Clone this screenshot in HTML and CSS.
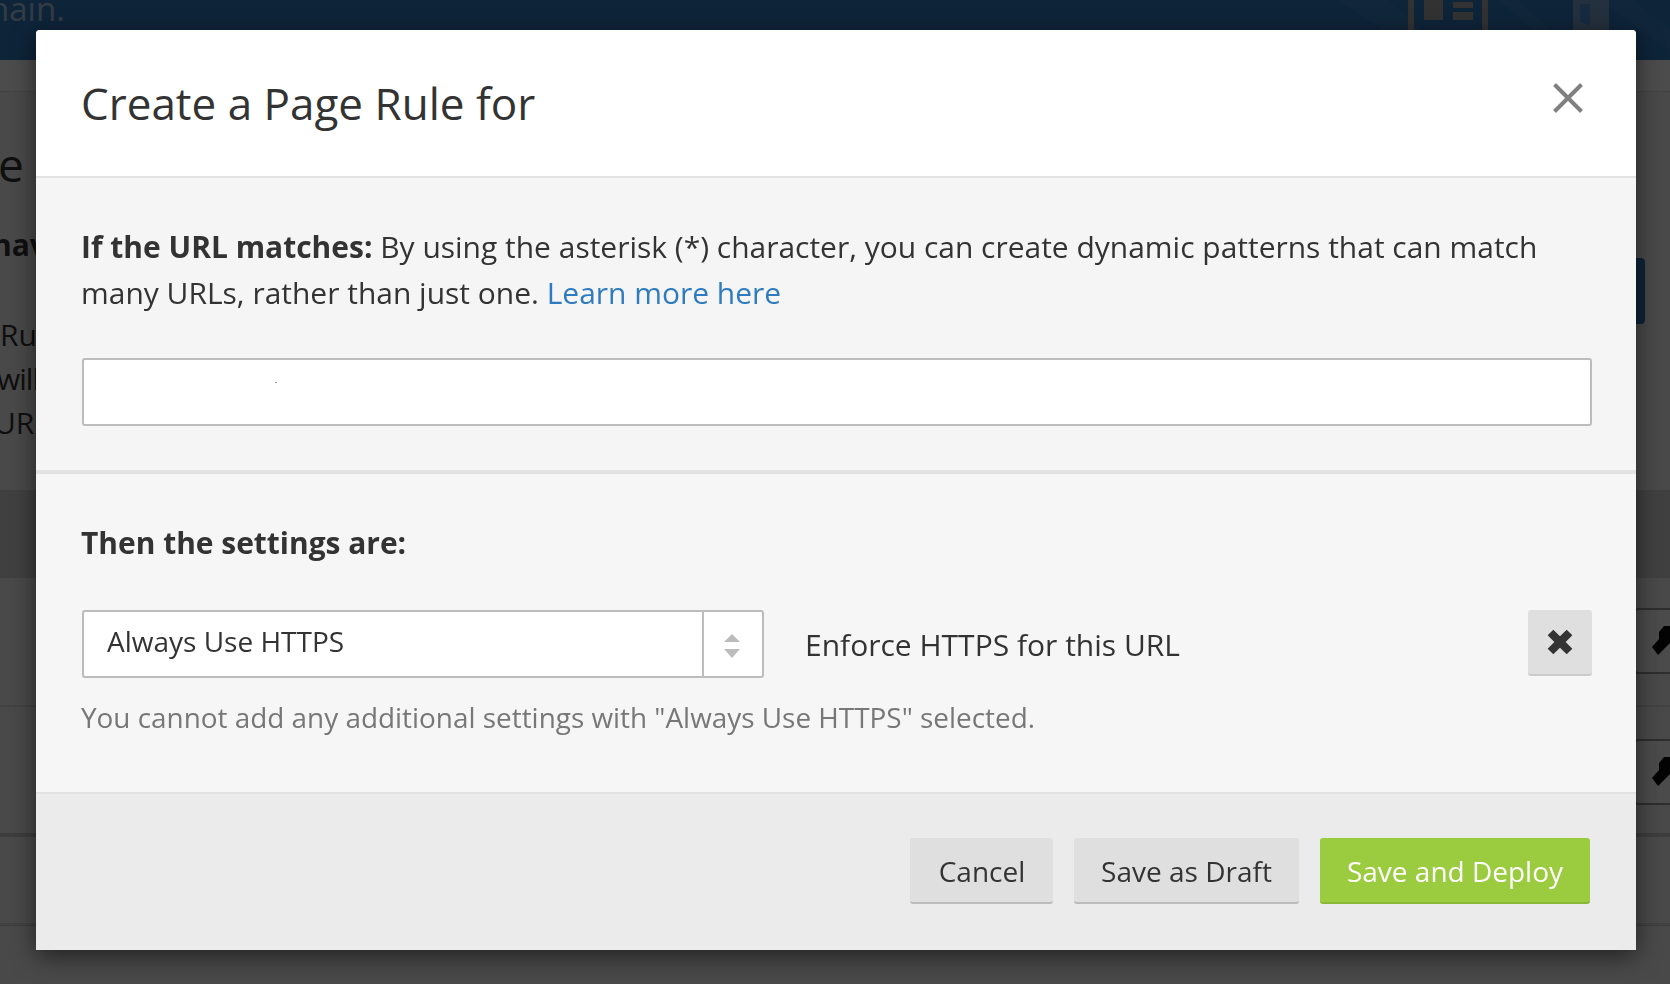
FILE: index.html
```html
<!DOCTYPE html>
<html>
<head>
    <title>Create a Page Rule</title>
    <link rel="stylesheet" href="styles.css">
</head>
<body>
    <div class="page">
        <div class="topbar">
            <span class="topbar-text">nain.</span>
            <svg class="topbar-icons" width="262" height="60" viewBox="0 0 262 60">
                <path d="M-70 0l90 60h30L-20 0zM90 0l70 60h16L110 0zM190 0l72 50V30L225 0z" fill="#fff" opacity=".06"/>
                <path d="M3 0v34M77 0v34" stroke="#a8a8a8" stroke-width="6" fill="none"/>
                <rect x="16" y="0" width="19" height="20" fill="#a8a8a8"/>
                <rect x="45" y="2" width="20" height="6" fill="#a8a8a8"/>
                <rect x="45" y="12" width="20" height="8" fill="#a8a8a8"/>
                <path d="M165 0h36v30h-36z" fill="#7aa0cc"/>
                <path d="M172 4h10v22l-10-4z" fill="#4a90d8"/>
            </svg>
        </div>
        <div class="subnav"></div>
        <div class="intro">
            <div class="intro-head"><span class="heading">e</span><a class="add-rule"></a></div>
            <p class="lead">hav</p>
            <p class="line line-ru">Ru</p>
            <p class="line line-will">will</p>
            <p class="line line-ur">UR</p>
        </div>
        <div class="table">
            <div class="table-head"></div>
            <div class="row"><span class="wrench-btn"><svg width="18" height="30" viewBox="0 0 18 30"><path d="M18 0h-6l-5 6v7L0 21l6 8 12-12z" fill="#0c0c0c"/></svg></span></div>
            <div class="row row-thick"><span class="wrench-btn"><svg width="18" height="30" viewBox="0 0 18 30"><path d="M18 0h-6l-5 6v7L0 21l6 8 12-12z" fill="#0c0c0c"/></svg></span></div>
            <div class="row row-short"></div>
        </div>
    </div>
    <div class="backdrop"></div>

    <div class="modal">
        <div class="modal-header">
            <h2>Create a Page Rule for</h2>
            <svg class="close-icon" width="30" height="30" viewBox="0 0 30 30"><path d="M1.500 1.500l27 27M28.500 1.500l-27 27" stroke="#808080" stroke-width="4" fill="none"/></svg>
        </div>
        <div class="modal-section section-url">
            <p class="intro-text"><strong>If the URL matches:</strong> By using the asterisk (*) character, you can create dynamic patterns that can match many URLs, rather than just one. <a href="#">Learn more here</a></p>
            <div class="url-field"><input type="text"><span class="speck"></span></div>
        </div>
        <div class="modal-section section-settings">
            <h3>Then the settings are:</h3>
            <div class="setting-row">
                <div class="select">
                    <span class="select-value">Always Use HTTPS</span>
                    <span class="select-arrows">
                        <svg width="16" height="24" viewBox="0 0 16 24"><path d="M8 0l8 8H0zM0 15h16l-8 9z" fill="#bcbcbc"/></svg>
                    </span>
                </div>
                <span class="setting-desc">Enforce HTTPS for this URL</span>
                <button class="btn btn-remove"><svg width="26" height="26" viewBox="0 0 26 26"><path d="M3.500 3.500l19 19M22.500 3.500l-19 19" stroke="#333" stroke-width="8" fill="none"/></svg></button>
            </div>
            <p class="hint">You cannot add any additional settings with "Always Use HTTPS" selected.</p>
        </div>
        <div class="modal-footer">
            <button class="btn btn-cancel">Cancel</button>
            <button class="btn btn-draft">Save as Draft</button>
            <button class="btn btn-primary">Save and Deploy</button>
        </div>
    </div>
</body>
</html>
```

FILE: styles.css
```css
* { box-sizing: border-box; }
html, body { margin: 0; height: 100%; }
body { font-family: "Open Sans", sans-serif; color: #333; background: #f6f6f6; overflow: hidden; }

/* page behind the dialog */
.page { height: 984px; overflow: hidden; background: #f6f6f6; }
.topbar { height: 60px; background: #2f78c0; display: flex; justify-content: space-between; overflow: hidden; }
.topbar-text { font-size: 33px; line-height: 18px; color: #fff; opacity: .6; margin-left: -11px; }
.topbar-icons { flex: none; overflow: visible; }
.subnav { height: 32px; background: #fff; border-bottom: 1px solid #ddd; }
.intro { height: 398px; padding-top: 44px; }
.intro-head { display: flex; justify-content: space-between; height: 56px; }
.heading { font-size: 46px; line-height: 56px; margin-left: -2px; }
.add-rule { display: block; width: 60px; height: 66px; margin-top: 122px; background: #2f78c0; margin-right: 25px; border-radius: 4px; flex: none; }
.lead { margin: 30px 0 0 -8px; font-size: 30px; font-weight: 700; line-height: 46px; }
.line { margin: 0; font-size: 30px; line-height: 44px; }
.line-ru { margin-top: 45px; margin-left: 0; }
.line-will { margin-left: -3px; letter-spacing: -1px; }
.line-ur { margin-left: -6px; }
.table { border-bottom: 1px solid #ccc; }
.table-head { height: 88px; background: #d8d8d8; }
.row { height: 129px; border-bottom: 2px solid #ddd; display: flex; justify-content: flex-end; align-items: flex-start; padding-top: 30px; }
.row-thick { height: 130px; border-bottom: 4px solid #ccc; padding-top: 32px; }
.row-short { height: 88px; }
.wrench-btn { width: 36px; height: 66px; border: 2px solid #999; border-right: 0; border-radius: 4px 0 0 4px; display: flex; align-items: center; justify-content: flex-end; background: #fafafa; }
.backdrop { position: fixed; inset: 0; background: rgba(0, 0, 0, .7); }

/* dialog */
.modal { position: absolute; left: 36px; top: 30px; width: 1600px; height: 920px; display: flex; flex-direction: column; background: #f5f5f5; border-radius: 4px 4px 0 0; box-shadow: 0 6px 24px rgba(0, 0, 0, .55); overflow: hidden; }
.modal-header { height: 148px; flex: none; background: #fff; border-bottom: 2px solid #e2e2e2; padding: 0 46px; display: flex; justify-content: space-between; }
.modal-header h2 { margin: 0 0 0 -1px; font-size: 44px; font-weight: 400; line-height: 146px; color: #333; }
.close-icon { margin: 53px 7px 0 0; }
.modal-section { padding: 0 44px 0 46px; flex: none; }
.section-url { height: 296px; padding-top: 46px; border-bottom: 4px solid #e2e2e2; }
.intro-text { margin: 0 0 0 -1px; font-size: 29.970px; line-height: 46px; color: #333; }
.intro-text a { color: #2f7bbf; text-decoration: none; }
.url-field { margin-top: 42px; position: relative; }
.url-field input { display: block; width: 100%; height: 68px; background: #fff; border: 2px solid #bcbcbc; border-radius: 3px; outline: 0; }
.speck { position: absolute; left: 193px; top: 24px; width: 2px; height: 1px; background: #999; }
.section-settings { height: 318px; padding-top: 46px; background: #f6f6f6; }
.section-settings h3 { margin: 0 0 0 -1px; font-size: 29.950px; font-weight: 700; line-height: 46px; color: #333; }
.setting-row { display: flex; margin-top: 44px; align-items: flex-start; }
.select { width: 682px; height: 68px; flex: none; display: flex; background: #fff; border: 2px solid #bcbcbc; border-radius: 3px; }
.select-value { flex: 1; padding-left: 23px; font-size: 28px; line-height: 58px; color: #333; }
.select-arrows { width: 60px; border-left: 2px solid #bcbcbc; display: flex; align-items: center; justify-content: center; padding: 4px 2px 0 0; }
.setting-desc { flex: 1; margin-left: 41px; font-size: 30px; line-height: 70px; color: #333; }
.hint { margin: 14px 0 0 -1px; font-size: 27.900px; line-height: 46px; color: #777; }
.modal-footer { flex: 1; background: #ebebeb; border-top: 2px solid #e2e2e2; padding: 44px 46px 0 0; display: flex; justify-content: flex-end; gap: 21px; }

.btn { height: 66px; border: 0; border-bottom: 2px solid #bbb; border-radius: 3px; background: #dfdfdf; color: #333; font-family: "Open Sans", sans-serif; font-size: 28px; padding: 1px 0 0; }
.btn-remove { width: 64px; display: flex; align-items: center; justify-content: center; border-bottom-color: #ccc; padding: 0; }
.btn-cancel { width: 143px; padding-left: 1px; }
.btn-draft { width: 225px; }
.btn-primary { width: 270px; background: #9bcb3f; border-bottom-color: #8ab835; color: #fff; }
```
